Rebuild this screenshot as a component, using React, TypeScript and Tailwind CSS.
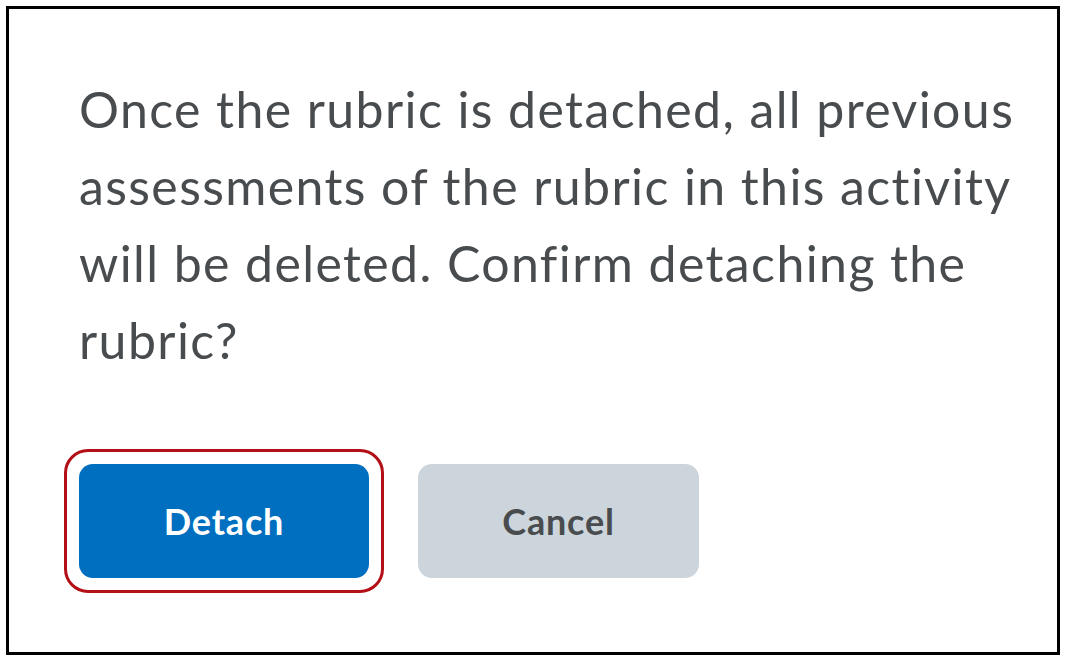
import React from 'react';

export default function App() {
  return (
    <div className="w-[1068px] h-[664px] bg-white pt-[6px] pl-[6px]" style={{ fontFamily: 'Lato, "Open Sans", sans-serif' }}>
      <div className="w-[1054px] h-[649px] border-[3px] border-black bg-white pl-[70px] pr-[30px] pt-[62px]">
        {/* 確認メッセージ */}
        <p className="text-[50px] leading-[77px] tracking-[1.4px] text-[#494c4e] font-normal">
          Once the rubric is detached, all previous assessments of the rubric in this activity will be deleted. Confirm
          detaching the rubric?
        </p>

        <div className="flex gap-[49px] mt-[85px]">
          <div className="relative">
            <button className="w-[290px] h-[114px] rounded-[14px] bg-[#006fbf] text-white text-[36px] tracking-[0.8px] font-bold">
              Detach
            </button>
            <span className="absolute -inset-[15px] border-[3px] border-[#b30f17] rounded-[24px] pointer-events-none" />
          </div>
          <button className="w-[281px] h-[114px] rounded-[14px] bg-[#cdd5dc] text-[#494c4e] text-[36px] tracking-[0.8px] font-bold">
            Cancel
          </button>
        </div>
      </div>
    </div>
  );
}
